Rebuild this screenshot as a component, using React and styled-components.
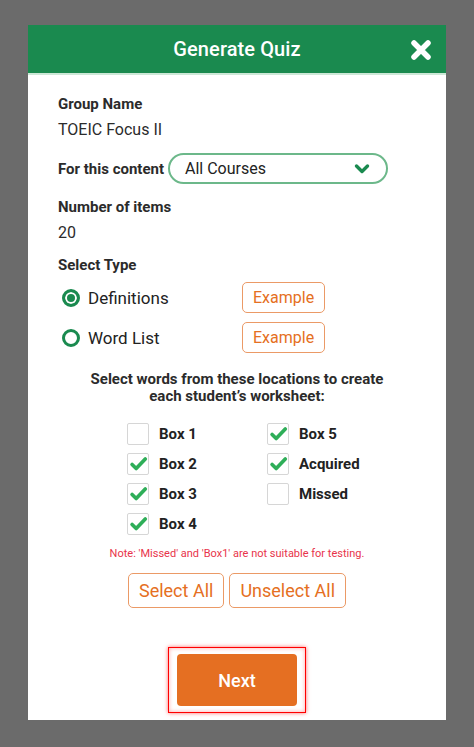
import styled, { createGlobalStyle } from "styled-components";

const GlobalStyle = createGlobalStyle`
  html, body {
    margin: 0;
    padding: 0;
    background: #6b6b6b;
    font-family: Roboto, "Liberation Sans", sans-serif;
  }
`;

const green = "#1a8a4f";
const orange = "#e56f22";

const boxes = [
  { label: "Box 1", checked: false },
  { label: "Box 5", checked: true },
  { label: "Box 2", checked: true },
  { label: "Acquired", checked: true },
  { label: "Box 3", checked: true },
  { label: "Missed", checked: false },
  { label: "Box 4", checked: true },
];

export default function App() {
  return (
    <Page>
      <GlobalStyle />
      <Modal>
        <Header>
          <Title>Generate Quiz</Title>
          <Close aria-label="close">
            <svg width="22" height="22" viewBox="0 0 22 22">
              <path
                d="M4 4 L18 18 M18 4 L4 18"
                stroke="#fff"
                strokeWidth="5.5"
                strokeLinecap="round"
              />
            </svg>
          </Close>
        </Header>
        <Body>
          <Label>Group Name</Label>
          <Value>TOEIC Focus II</Value>
          <ContentRow>
            <Label>For this content</Label>
            <Select>
              <span>All Courses</span>
              <svg width="16" height="12" viewBox="0 0 16 12">
                <path
                  d="M2.5 3 L8 8.5 L13.5 3"
                  fill="none"
                  stroke={green}
                  strokeWidth="3.4"
                  strokeLinecap="round"
                  strokeLinejoin="round"
                />
              </svg>
            </Select>
          </ContentRow>
          <Label $top={13}>Number of items</Label>
          <Value>20</Value>
          <Label $top={12}>Select Type</Label>
          <TypeRow $top={7}>
            <RadioLabel>
              <Radio $on />
              Definitions
            </RadioLabel>
            <OutlineButton>Example</OutlineButton>
          </TypeRow>
          <TypeRow $top={9}>
            <RadioLabel>
              <Radio />
              Word List
            </RadioLabel>
            <OutlineButton>Example</OutlineButton>
          </TypeRow>
          <Heading>
            Select words from these locations to create
            <br />
            each student’s worksheet:
          </Heading>
          <BoxGrid>
            {boxes.map((b) => (
              <BoxItem key={b.label}>
                <CheckBox>
                  {b.checked && (
                    <svg width="22" height="22" viewBox="0 0 22 22">
                      <path
                        d="M4.5 11.5 L9 16 L19 5.5"
                        fill="none"
                        stroke="#2eae58"
                        strokeWidth="4"
                        strokeLinecap="round"
                        strokeLinejoin="round"
                      />
                    </svg>
                  )}
                </CheckBox>
                {b.label}
              </BoxItem>
            ))}
          </BoxGrid>
          <Note>Note: 'Missed' and 'Box1' are not suitable for testing.</Note>
          <ButtonRow>
            <OutlineButton $big>Select All</OutlineButton>
            <OutlineButton $big>Unselect All</OutlineButton>
          </ButtonRow>
          <Footer>
            <FocusRing>
              <NextButton>Next</NextButton>
            </FocusRing>
          </Footer>
        </Body>
      </Modal>
    </Page>
  );
}

const Page = styled.div`
  min-height: 747px;
  padding-top: 25px;
  box-sizing: border-box;
  display: flex;
  justify-content: center;
`;

const Modal = styled.div`
  width: 418px;
  background: #fff;
  align-self: flex-start;
`;

const Header = styled.div`
  position: relative;
  height: 48px;
  background: ${green};
  border-bottom: 2px solid #cde8d7;
  display: flex;
  align-items: center;
  justify-content: center;
`;

const Title = styled.h1`
  margin: 0;
  color: #fff;
  font-size: 20px;
  font-weight: 500;
  letter-spacing: 0.1px;
`;

const Close = styled.button`
  position: absolute;
  right: 14px;
  top: 14px;
  padding: 0;
  border: none;
  background: none;
  display: flex;
`;

const Body = styled.div`
  padding: 19px 30px 7px;
  color: #2b2b2b;
`;

const Label = styled.div`
  margin-top: ${(p) => p.$top || 0}px;
  font-size: 15px;
  font-weight: 700;
  line-height: 20px;
  white-space: nowrap;
`;

const Value = styled.div`
  margin-top: 6px;
  font-size: 16px;
  line-height: 20px;
`;

const ContentRow = styled.div`
  margin-top: 13px;
  display: flex;
  align-items: center;
  gap: 4px;
`;

const Select = styled.div`
  box-sizing: border-box;
  width: 220px;
  height: 31px;
  border: 2px solid #6cb88a;
  border-radius: 16px;
  padding: 0 16px 0 15px;
  display: flex;
  align-items: center;
  justify-content: space-between;
  font-size: 16px;
  color: #222;
`;

const TypeRow = styled.div`
  margin-top: ${(p) => p.$top}px;
  padding-left: 4px;
  display: flex;
  align-items: center;
`;

const RadioLabel = styled.label`
  width: 180px;
  display: flex;
  align-items: center;
  gap: 8px;
  font-size: 17px;
  color: #222;
`;

const Radio = styled.span`
  box-sizing: border-box;
  width: 18px;
  height: 18px;
  border-radius: 50%;
  border: 3px solid ${green};
  background: ${(p) => (p.$on ? green : "#fff")};
  box-shadow: ${(p) => (p.$on ? "inset 0 0 0 2px #fff" : "none")};
`;

const OutlineButton = styled.button`
  box-sizing: border-box;
  height: ${(p) => (p.$big ? 35 : 31)}px;
  padding: 0 10px;
  background: #fff;
  border: 1.5px solid #eb9a66;
  border-radius: 5px;
  color: ${orange};
  font-family: inherit;
  font-size: ${(p) => (p.$big ? 18 : 16)}px;
`;

const Heading = styled.div`
  margin-top: 18px;
  text-align: center;
  font-size: 15px;
  font-weight: 700;
  line-height: 17px;
  color: #2b2b2b;
`;

const BoxGrid = styled.div`
  margin: 18px 0 0 69px;
  display: grid;
  grid-template-columns: 140px 140px;
  row-gap: 8px;
`;

const BoxItem = styled.div`
  display: flex;
  align-items: center;
  gap: 10px;
  font-size: 15px;
  font-weight: 700;
  color: #222;
`;

const CheckBox = styled.span`
  box-sizing: border-box;
  width: 22px;
  height: 22px;
  border: 1px solid #d6d6d6;
  border-radius: 2px;
  display: flex;
  align-items: center;
  justify-content: center;
  overflow: visible;
`;

const Note = styled.div`
  margin-top: 12px;
  text-align: center;
  font-size: 11px;
  line-height: 14px;
  color: #e8334a;
`;

const ButtonRow = styled.div`
  margin-top: 12px;
  display: flex;
  justify-content: center;
  gap: 5px;
`;

const Footer = styled.div`
  margin-top: 39px;
  display: flex;
  justify-content: center;
`;

const FocusRing = styled.div`
  padding: 6px 8px;
  border: 1.5px solid #f00;
  box-shadow: 0 0 4px rgba(255, 0, 0, 0.6), inset 0 0 4px rgba(255, 0, 0, 0.35);
`;

const NextButton = styled.button`
  width: 120px;
  height: 52px;
  border: none;
  border-radius: 4px;
  background: ${orange};
  color: #fff;
  font-family: inherit;
  font-size: 18px;
  font-weight: 500;
`;
